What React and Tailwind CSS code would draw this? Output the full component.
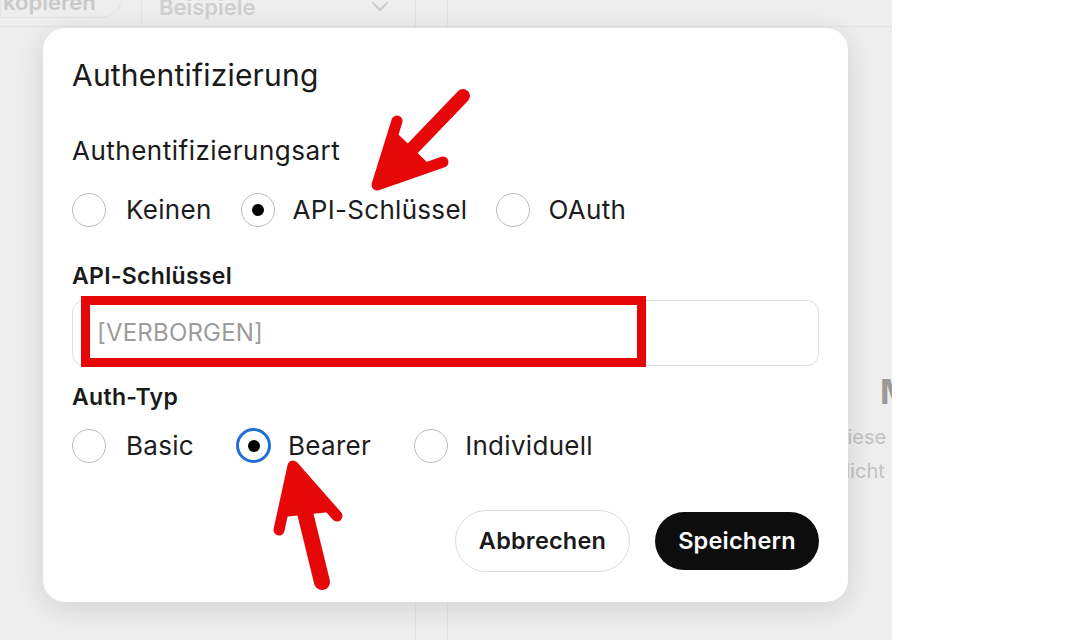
import React from 'react';

const font = { fontFamily: 'Inter, "Noto Sans", sans-serif' };

const Radio = ({ label, checked, blue, gap = 'gap-[20px]' }) => (
  <div className={`flex items-center ${gap}`}>
    {blue ? (
      <div className="w-[35px] h-[35px] rounded-full border-[3px] border-[#1f6fd6] flex items-center justify-center">
        <div className="w-[12px] h-[12px] rounded-full bg-black"></div>
      </div>
    ) : checked ? (
      <div className="w-[34px] h-[34px] rounded-full border-[1.5px] border-[#bdbdbd] flex items-center justify-center">
        <div className="w-[12px] h-[12px] rounded-full bg-black"></div>
      </div>
    ) : (
      <div className="w-[34px] h-[34px] rounded-full border-[1.5px] border-[#bdbdbd]"></div>
    )}
    <span className="text-[26px] leading-[34px] tracking-[0.3px] text-[#1c1c1c]">{label}</span>
  </div>
);

export default function App() {
  return (
    <div className="w-[1082px] h-[640px] flex bg-white relative overflow-hidden" style={font}>
      {/* dimmed page behind the dialog */}
      <div className="w-[892px] h-full shrink-0 bg-[#eeeeee] flex flex-col overflow-hidden">
        <div className="h-[27px] flex border-b border-[#e3e3e3] shrink-0">
          <div className="w-[123px] shrink-0 h-[44px] -mt-[26px] rounded-r-[22px] border border-[#e2e2e2] flex items-center pl-[2px]">
            <span className="text-[22px] font-semibold text-[#c9c9c9] mt-[12px]">kopieren</span>
          </div>
          <div className="w-[18px] shrink-0"></div>
          <div className="w-[275px] shrink-0 border-x border-[#e2e2e2] flex items-start justify-between pl-[17px] pr-[26px]">
            <span className="text-[22px] font-semibold text-[#cfcfcf] -mt-[9px]">Beispiele</span>
            <svg width="18" height="10" viewBox="0 0 18 10" className="mt-[2px]">
              <path d="M2 1 L9 8 L16 1" fill="none" stroke="#cdcdcd" strokeWidth="2" strokeLinecap="round" />
            </svg>
          </div>
          <div className="w-[32px] shrink-0 border-r border-[#e4e4e4]"></div>
        </div>
        <div className="flex-1 flex">
          <div className="w-[416px] shrink-0 border-r border-[#e4e4e4]"></div>
          <div className="w-[32px] shrink-0 border-r border-[#e4e4e4]"></div>
          <div className="w-[444px] shrink-0 overflow-hidden flex flex-col pt-[345px] pl-[432px] whitespace-nowrap">
            <span className="text-[34px] font-bold text-[#9a9a9a] leading-[40px]">Mein</span>
            <span className="text-[20px] text-[#c2c2c2] leading-[34px] mt-[8px] -ml-[47px]">Diese</span>
            <span className="text-[20px] text-[#c2c2c2] leading-[34px] -ml-[96px]">ermöglicht</span>
          </div>
        </div>
      </div>

      {/* dialog */}
      <div className="absolute left-[43px] top-[28px] w-[805px] h-[574px] bg-white rounded-[22px] shadow-[0_6px_30px_rgba(0,0,0,0.12)] pt-[30px] px-[29px] flex flex-col">
        <h2 className="text-[30px] leading-[34px] tracking-[0.2px] text-[#1a1a1a]">Authentifizierung</h2>
        <p className="mt-[44px] text-[26px] leading-[30px] tracking-[0.5px] text-[#1a1a1a]">Authentifizierungsart</p>
        <div className="mt-[27px] flex items-center">
          <Radio label="Keinen" />
          <div className="w-[29px]"></div>
          <Radio label="API-Schlüssel" checked gap="gap-[18px]" />
          <div className="w-[29px]"></div>
          <Radio label="OAuth" gap="gap-[18px]" />
        </div>
        <p className="mt-[35px] text-[23px] leading-[28px] tracking-[0.3px] font-semibold text-[#1a1a1a]">API-Schlüssel</p>
        <div className="mt-[10px] h-[66px] rounded-[12px] border border-[#dedede] flex items-center pl-[24px]">
          <span className="text-[24px] tracking-[0.2px] text-[#9c9c9c]">[VERBORGEN]</span>
        </div>
        <p className="mt-[17px] text-[23px] leading-[28px] tracking-[0.3px] font-semibold text-[#1a1a1a]">Auth-Typ</p>
        <div className="mt-[17px] flex items-center">
          <Radio label="Basic" />
          <div className="w-[42px]"></div>
          <Radio label="Bearer" blue gap="gap-[17px]" />
          <div className="w-[43px]"></div>
          <Radio label="Individuell" gap="gap-[17px]" />
        </div>
        <div className="mt-[47px] flex justify-end items-center gap-[25px]">
          <button className="w-[175px] h-[62px] rounded-full border border-[#dcdcdc] bg-white text-[23.5px] tracking-[0.2px] font-semibold text-[#1a1a1a]">Abbrechen</button>
          <button className="w-[164px] h-[58px] rounded-full bg-[#0d0d0d] text-[23.5px] tracking-[0.2px] font-semibold text-white">Speichern</button>
        </div>

        {/* red annotation box */}
        <div className="absolute left-[38px] top-[268px] w-[565px] h-[71px] border-[9px] border-[#e60808] pointer-events-none"></div>
      </div>

      {/* red arrows */}
      <svg className="absolute left-0 top-0 pointer-events-none" width="1082" height="640" viewBox="0 0 1082 640">
        <g stroke="#e60808" fill="#e60808" strokeLinecap="round" strokeLinejoin="round">
          <path d="M463 96 L388 174" strokeWidth="14" fill="none" />
          <path d="M397 121 L377 185 L443 162" strokeWidth="11" fill="none" />
          <path d="M379 182 L396 135 L425 163 Z" strokeWidth="4" />
          <path d="M322 582 L297 480" strokeWidth="16" fill="none" />
          <path d="M279 530 L293 466 L337 516" strokeWidth="11" fill="none" />
          <path d="M293 470 L283 515 L330 510 Z" strokeWidth="4" />
        </g>
      </svg>
    </div>
  );
}
